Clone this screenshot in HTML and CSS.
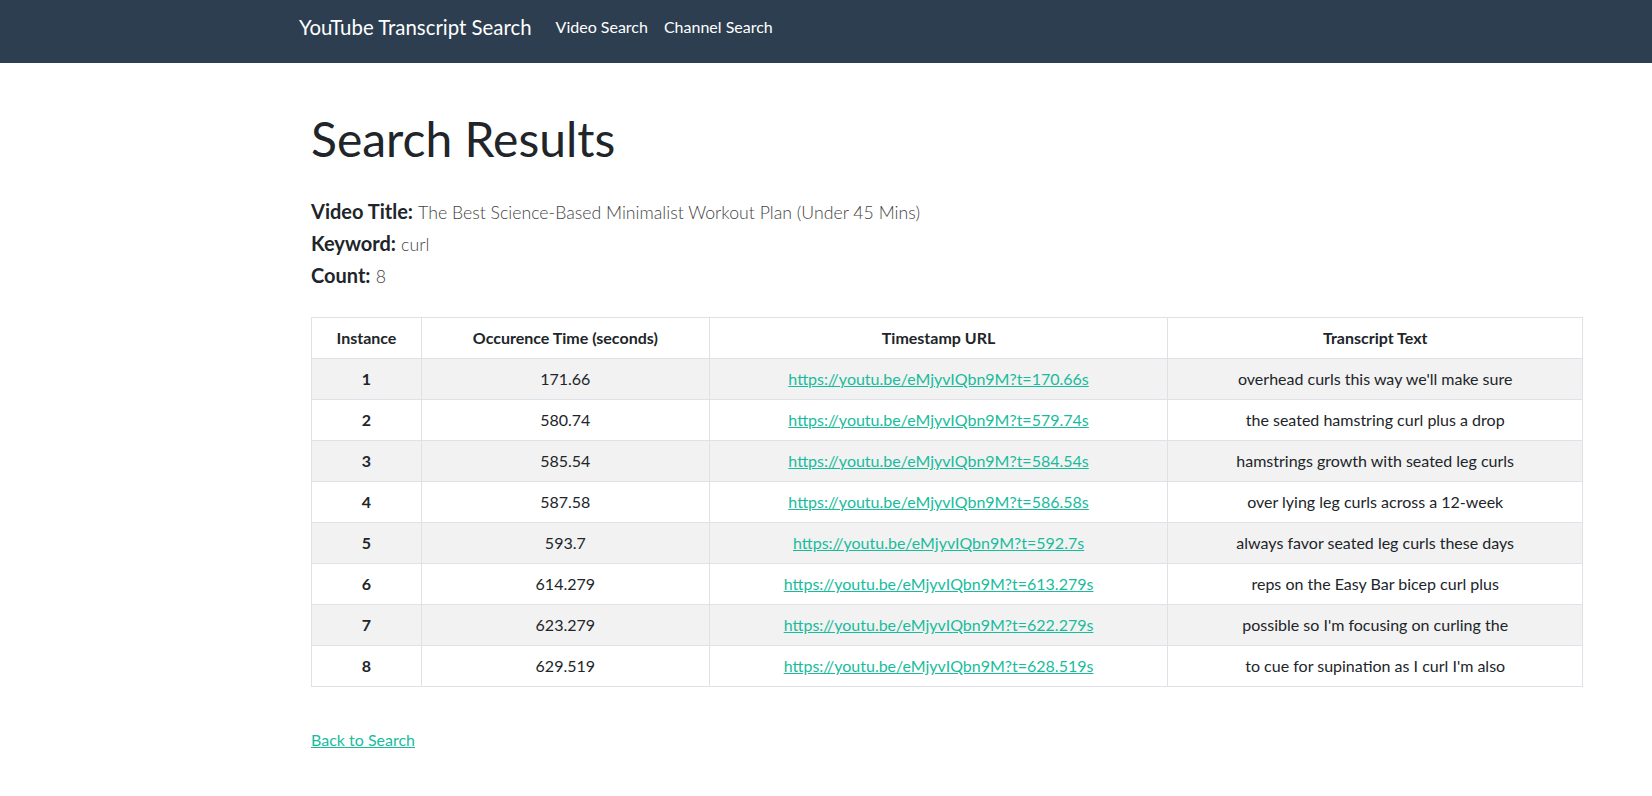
FILE: index.html
```html
<!DOCTYPE html>
<html lang="en">
<head>
<meta charset="utf-8">
<title>Search Results - YouTube Transcript Search</title>
<link rel="stylesheet" href="styles.css">
</head>
<body>
<nav class="navbar">
  <div class="navbar-inner">
    <a class="brand" href="#">YouTube Transcript Search</a>
    <ul class="nav">
      <li><a class="nav-link" href="#">Video Search</a></li>
      <li><a class="nav-link" href="#">Channel Search</a></li>
    </ul>
  </div>
</nav>
<main class="page">
  <h1 class="title">Search Results</h1>
  <div class="info">
    <div class="info-line"><strong>Video Title:</strong> <span class="value">The Best Science-Based Minimalist Workout Plan (Under 45 Mins)</span></div>
    <div class="info-line"><strong>Keyword:</strong> <span class="value">curl</span></div>
    <div class="info-line"><strong>Count:</strong> <span class="value">8</span></div>
  </div>
  <table class="results">
    <colgroup>
      <col class="c-inst">
      <col class="c-time">
      <col class="c-url">
      <col class="c-text">
    </colgroup>
    <thead>
      <tr><th>Instance</th><th>Occurence Time (seconds)</th><th>Timestamp URL</th><th>Transcript Text</th></tr>
    </thead>
    <tbody>
      <tr><th>1</th><td>171.66</td><td><a href="#">https://youtu.be/eMjyvIQbn9M?t=170.66s</a></td><td>overhead curls this way we'll make sure</td></tr>
      <tr><th>2</th><td>580.74</td><td><a href="#">https://youtu.be/eMjyvIQbn9M?t=579.74s</a></td><td>the seated hamstring curl plus a drop</td></tr>
      <tr><th>3</th><td>585.54</td><td><a href="#">https://youtu.be/eMjyvIQbn9M?t=584.54s</a></td><td>hamstrings growth with seated leg curls</td></tr>
      <tr><th>4</th><td>587.58</td><td><a href="#">https://youtu.be/eMjyvIQbn9M?t=586.58s</a></td><td>over lying leg curls across a 12-week</td></tr>
      <tr><th>5</th><td>593.7</td><td><a href="#">https://youtu.be/eMjyvIQbn9M?t=592.7s</a></td><td>always favor seated leg curls these days</td></tr>
      <tr><th>6</th><td>614.279</td><td><a href="#">https://youtu.be/eMjyvIQbn9M?t=613.279s</a></td><td>reps on the Easy Bar bicep curl plus</td></tr>
      <tr><th>7</th><td>623.279</td><td><a href="#">https://youtu.be/eMjyvIQbn9M?t=622.279s</a></td><td>possible so I'm focusing on curling the</td></tr>
      <tr><th>8</th><td>629.519</td><td><a href="#">https://youtu.be/eMjyvIQbn9M?t=628.519s</a></td><td>to cue for supination as I curl I'm also</td></tr>
    </tbody>
  </table>
  <p class="back"><a href="#">Back to Search</a></p>
</main>
</body>
</html>
```
FILE: styles.css
```css
html, body {
  margin: 0;
  padding: 0;
}
body {
  font-family: Lato, "Liberation Sans", sans-serif;
  font-size: 16px;
  line-height: 1.5;
  color: #212529;
  background: #fff;
}
a {
  color: #18bc9c;
}
.navbar {
  background: #2c3e50;
  height: 63px;
  box-sizing: border-box;
  padding-top: 12px;
}
.navbar-inner {
  display: flex;
  align-items: flex-start;
  padding-left: 299px;
}
.brand {
  color: #fff;
  text-decoration: none;
  font-size: 20.4px;
  line-height: 30px;
  margin-right: 16px;
}
.nav {
  display: flex;
  list-style: none;
  margin: 3px 0 0;
  padding: 0;
}
.nav-link {
  display: block;
  color: #fff;
  text-decoration: none;
  font-size: 16px;
  padding: 0 8px;
  line-height: 24px;
}
.page {
  padding: 47px 69px 0 311px;
}
.title {
  font-size: 48px;
  font-weight: 400;
  line-height: 58px;
  margin: 0 0 31px;
  color: #212529;
}
.info {
  display: flex;
  flex-direction: column;
  gap: 8px;
}
.info-line {
  font-size: 20px;
  line-height: 24px;
  height: 24px;
}
.info-line strong {
  font-weight: 700;
  color: #212529;
}
.value {
  color: #444;
  font-size: 17.7px;
  font-weight: 300;
  line-height: 1;
}
.results {
  margin-top: 30px;
  width: 100%;
  border-collapse: collapse;
  border: 1px solid #dee2e6;
}
.c-inst { width: 110px; }
.c-time { width: 288px; }
.c-url { width: 459px; }
.c-text { width: 415px; }
.results th,
.results td {
  border: 1px solid #dee2e6;
  padding: 8px;
  text-align: center;
  line-height: 24px;
  font-size: 16px;
  vertical-align: top;
}
.results th {
  font-weight: 700;
}
.results tbody tr:nth-child(odd) {
  background: #f2f2f2;
}
.back {
  margin: 41px 0 0;
  line-height: 24px;
}
```
